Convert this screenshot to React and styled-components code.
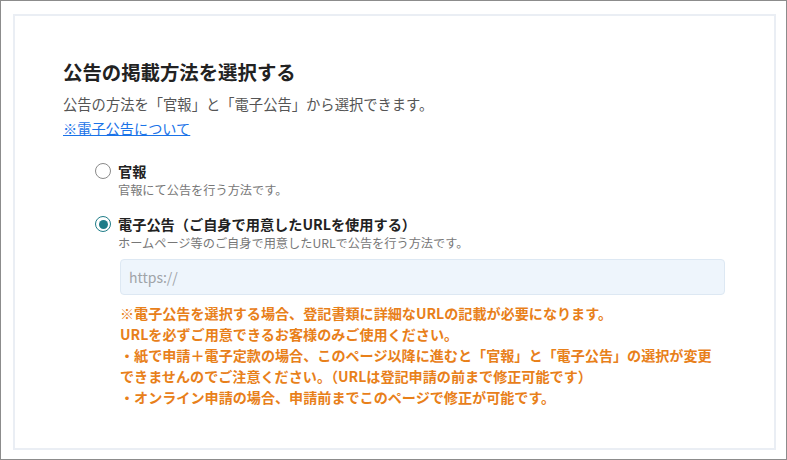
import React from "react";
import styled, { createGlobalStyle } from "styled-components";

const Global = createGlobalStyle`
  html, body { margin: 0; padding: 0; background: #fff; }
  body { font-family: "Noto Sans CJK JP", "Noto Sans", sans-serif; }
  * { box-sizing: border-box; }
`;

const Frame = styled.div`
  width: 787px;
  height: 460px;
  border: 1px solid #8c8c8c;
  padding: 13px 10px 9px 12px;
  background: #fff;
  display: flex;
`;

const Card = styled.section`
  flex: 1;
  border: 2px solid #eaeef4;
  padding: 42px 0 0 48px;
  display: flex;
  flex-direction: column;
`;

const Title = styled.h2`
  margin: 0;
  font-size: 19.4px;
  line-height: 28px;
  font-weight: 700;
  color: #222;
`;

const Lead = styled.p`
  margin: 6px 0 0;
  font-size: 14.3px;
  line-height: 23px;
  color: #555;
`;

const Link = styled.a`
  font-size: 14.2px;
  line-height: 23px;
  color: #1a73e8;
  text-decoration: underline;
  align-self: flex-start;
  margin-top: 2px;
`;

const Options = styled.div`
  margin: 21px 0 0 32px;
  display: flex;
  flex-direction: column;
  gap: 15px;
`;

const Option = styled.label`
  display: grid;
  grid-template-columns: 16px 1fr;
  column-gap: 7px;
  cursor: pointer;
`;

const Radio = styled.span`
  width: 16px;
  height: 16px;
  margin-top: 2px;
  border-radius: 50%;
  border: 1.5px solid ${(p) => (p.$checked ? "#1f7d88" : "#8a8a8a")};
  background: #fff;
  display: flex;
  align-items: center;
  justify-content: center;
  &::after {
    content: "";
    width: 9px;
    height: 9px;
    border-radius: 50%;
    background: ${(p) => (p.$checked ? "#1f7d88" : "transparent")};
  }
`;

const OptionLabel = styled.span`
  font-size: 14.2px;
  line-height: 20px;
  font-weight: 700;
  color: #222;
`;

const OptionDesc = styled.span`
  grid-column: 2;
  font-size: 12.2px;
  line-height: 18px;
  color: #777;
`;

const Extra = styled.div`
  grid-column: 2;
  margin-left: 2px;
  display: flex;
  flex-direction: column;
`;

const UrlInput = styled.input`
  margin-top: 7px;
  width: 605px;
  height: 36px;
  border: 1px solid #dde8f3;
  border-radius: 4px;
  background: #eef5fc;
  padding: 0 8px;
  font-family: "Noto Sans CJK JP", "Noto Sans", sans-serif;
  font-size: 14px;
  color: #333;
  outline: none;
  &::placeholder { color: #a0a4a8; }
`;

const Notice = styled.p`
  margin: 8px 0 0;
  font-size: 14.1px;
  line-height: 21px;
  font-weight: 700;
  color: #e8801a;
  white-space: nowrap;
`;

export default function App() {
  return (
    <>
      <Global />
      <Frame>
        <Card>
          <Title>公告の掲載方法を選択する</Title>
          <Lead>公告の方法を「官報」と「電子公告」から選択できます。</Lead>
          <Link href="#">※電子公告について</Link>
          <Options>
            <Option>
              <Radio />
              <OptionLabel>官報</OptionLabel>
              <OptionDesc>官報にて公告を行う方法です。</OptionDesc>
            </Option>
            <Option>
              <Radio $checked />
              <OptionLabel>電子公告（ご自身で用意したURLを使用する）</OptionLabel>
              <OptionDesc>ホームページ等のご自身で用意したURLで公告を行う方法です。</OptionDesc>
              <Extra>
                <UrlInput placeholder="https://" />
                <Notice>
                  ※電子公告を選択する場合、登記書類に詳細なURLの記載が必要になります。
                  <br />
                  URLを必ずご用意できるお客様のみご使用ください。
                  <br />
                  ・紙で申請＋電子定款の場合、このページ以降に進むと「官報」と「電子公告」の選択が変更
                  <br />
                  できませんのでご注意ください。（URLは登記申請の前まで修正可能です）
                  <br />
                  ・オンライン申請の場合、申請前までこのページで修正が可能です。
                </Notice>
              </Extra>
            </Option>
          </Options>
        </Card>
      </Frame>
    </>
  );
}
